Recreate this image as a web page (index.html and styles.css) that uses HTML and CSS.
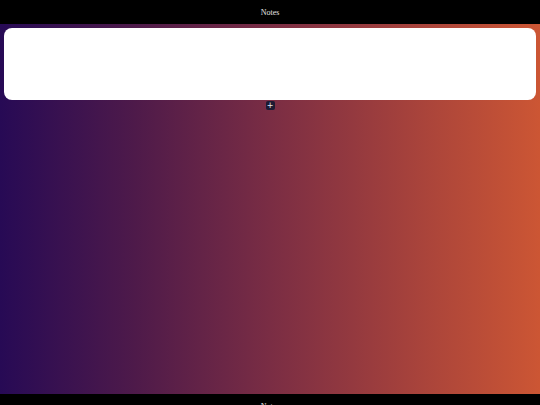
FILE: index.html
```html
<!DOCTYPE html>
<html>
<head>
<meta charset="utf-8">
<link rel="stylesheet" href="styles.css">
</head>
<body>
<div class="app">
  <header class="topbar">Notes</header>
  <main class="stage">
    <div class="card"></div>
    <div class="add-row"><button class="add-btn">+</button></div>
  </main>
  <footer class="bottombar"><span class="foot-text">Notes</span></footer>
</div>
</body>
</html>
```
FILE: styles.css
```css
html, body {
  margin: 0;
  padding: 0;
  width: 540px;
  height: 405px;
  overflow: hidden;
  background: #000;
  font-family: "Liberation Serif", serif;
}
.app {
  display: flex;
  flex-direction: column;
  height: 405px;
}
.topbar {
  height: 24px;
  flex: none;
  background: #000;
  color: #e6e6e6;
  font-size: 8px;
  display: flex;
  align-items: center;
  justify-content: center;
}
.stage {
  flex: 1;
  background: linear-gradient(to right, #270a55 0%, #4e1a4a 25%, #7a2d44 50%, #a4413c 75%, #cc5634 100%);
  padding: 4px 4px 0 4px;
  display: flex;
  flex-direction: column;
}
.card {
  height: 72px;
  background: #fff;
  border-radius: 8px;
}
.add-row {
  display: flex;
  justify-content: center;
  padding-top: 1px;
}
.add-btn {
  width: 9px;
  height: 9px;
  padding: 0;
  border: none;
  border-radius: 2px;
  background: #1c1a33;
  color: #e8e8f0;
  font-family: "DejaVu Sans", sans-serif;
  font-size: 8px;
  line-height: 9px;
  text-align: center;
}
.bottombar {
  height: 11px;
  flex: none;
  background: #000;
  display: flex;
  justify-content: center;
  padding-top: 9px;
  box-sizing: border-box;
  overflow: hidden;
}
.foot-text {
  color: #e6e6e6;
  font-size: 8px;
  line-height: 8px;
}
```
